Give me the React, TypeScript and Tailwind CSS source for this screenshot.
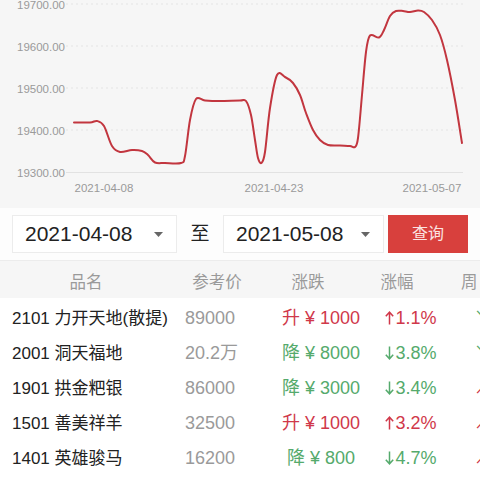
import React from "react";

type Pt = [number, number];

const linePoints: Pt[] = [
  [74, 122.5], [90, 122.5], [97, 121], [104, 126], [112, 146], [120, 152],
  [132, 150], [142, 151], [148, 155], [155, 162.5], [165, 163], [181, 163],
  [185, 156], [190, 120], [196, 99], [205, 100.5], [220, 101], [240, 100.5],
  [246, 101], [251, 115], [255, 140], [258, 158], [261.5, 163], [265, 152],
  [270, 108], [277, 75], [285, 77], [293, 83], [300, 95], [306, 113],
  [313, 130], [320, 140], [328, 145], [340, 145.5], [350, 146], [355, 147],
  [358, 138], [362, 95], [366, 52], [370, 35.5], [379, 37.5], [384, 30],
  [390, 16], [396, 11], [403, 11], [410, 12], [418, 10.5], [424, 12],
  [432, 20], [440, 35], [447, 60], [455, 100], [462, 143],
];

// catmull-rom -> cubic bezier
function smoothPath(pts: Pt[]) {
  let d = `M${pts[0][0]},${pts[0][1]}`;
  for (let i = 0; i < pts.length - 1; i++) {
    const p0 = pts[i - 1] || pts[i];
    const p1 = pts[i];
    const p2 = pts[i + 1];
    const p3 = pts[i + 2] || p2;
    const c1x = p1[0] + (p2[0] - p0[0]) / 6;
    const c1y = p1[1] + (p2[1] - p0[1]) / 6;
    const c2x = p2[0] - (p3[0] - p1[0]) / 6;
    const c2y = p2[1] - (p3[1] - p1[1]) / 6;
    d += ` C${c1x.toFixed(1)},${c1y.toFixed(1)} ${c2x.toFixed(1)},${c2y.toFixed(1)} ${p2[0]},${p2[1]}`;
  }
  return d;
}

const yLabels = [
  { v: "19700.00", y: 4 },
  { v: "19600.00", y: 46 },
  { v: "19500.00", y: 88 },
  { v: "19400.00", y: 130 },
  { v: "19300.00", y: 172.5 },
];

const xLabels = [
  { v: "2021-04-08", x: 104 },
  { v: "2021-04-23", x: 274 },
  { v: "2021-05-07", x: 432 },
];

const rows = [
  { name: "2101 力开天地(散提)", price: "89000", up: true, diff: "1000", pct: "1.1%", week: false },
  { name: "2001 洞天福地", price: "20.2万", up: false, diff: "8000", pct: "3.8%", week: false },
  { name: "1901 拱金粑银", price: "86000", up: false, diff: "3000", pct: "3.4%", week: true },
  { name: "1501 善美祥羊", price: "32500", up: true, diff: "1000", pct: "3.2%", week: true },
  { name: "1401 英雄骏马", price: "16200", up: false, diff: "800", pct: "4.7%", week: true },
];

function Chart() {
  return (
    <div className="h-[208px] bg-[#f6f6f6]">
      <svg width="480" height="208" viewBox="0 0 480 208" className="block">
        {yLabels.slice(0, 4).map((l) => (
          <line key={l.v} x1="66" x2="463" y1={l.y} y2={l.y} stroke="#e4e4e4" strokeWidth="1" strokeDasharray="2 3" />
        ))}
        <line x1="66" x2="463" y1="172.5" y2="172.5" stroke="#e2e2e2" strokeWidth="1" />
        {yLabels.map((l) => (
          <text key={l.v} x="65" y={l.y + 4.5} textAnchor="end" fontSize="11.5" fill="#9a9a9a" fontFamily="'Liberation Sans', Arial, sans-serif">
            {l.v}
          </text>
        ))}
        {xLabels.map((l) => (
          <text key={l.v} x={l.x} y="192" textAnchor="middle" fontSize="11.5" fill="#9a9a9a" fontFamily="'Liberation Sans', Arial, sans-serif">
            {l.v}
          </text>
        ))}
        <path d={smoothPath(linePoints)} fill="none" stroke="#c2363f" strokeWidth="2" strokeLinejoin="round" strokeLinecap="round" />
      </svg>
    </div>
  );
}

function DateBox({ value, width }: { value: string; width: string }) {
  return (
    <div className={`${width} shrink-0 h-[38px] flex items-center justify-between bg-white border border-[#ececec] pl-[12px] pr-[13px]`}>
      <span className="text-[21px] text-[#222]">{value}</span>
      <svg width="9" height="5" viewBox="0 0 9 5">
        <path d="M0 0 L9 0 L4.5 5 Z" fill="#666" />
      </svg>
    </div>
  );
}

function Arrow({ up }: { up: boolean }) {
  return (
    <svg width="9" height="14" viewBox="0 0 9 14" className="inline-block mr-[1px] align-[-1px]">
      {up ? (
        <path d="M4.5 13.5 V1.5 M0.8 5.2 L4.5 1.2 L8.2 5.2" fill="none" stroke="currentColor" strokeWidth="1.5" />
      ) : (
        <path d="M4.5 0.5 V12.5 M0.8 8.8 L4.5 12.8 L8.2 8.8" fill="none" stroke="currentColor" strokeWidth="1.5" />
      )}
    </svg>
  );
}

export default function App() {
  const red = "text-[#d0384a]";
  const green = "text-[#55aa6c]";
  return (
    <div
      className="w-[480px] h-[480px] overflow-hidden bg-white"
      style={{ fontFamily: "'Liberation Sans', 'Noto Sans CJK SC', sans-serif" }}
    >
      <Chart />

      <div className="h-[53px] flex items-center pl-[12px] bg-[#fdfdfd] border-b border-[#ececec]">
        <DateBox value="2021-04-08" width="w-[165px]" />
        <span className="w-[46px] shrink-0 text-center text-[19px] text-[#222]">至</span>
        <DateBox value="2021-05-08" width="w-[161px]" />
        <button className="ml-[4px] shrink-0 w-[80px] h-[38px] bg-[#d8403d] text-[#fbe3e2] text-[16px]">查询</button>
      </div>

      <div className="h-[37px] flex items-center pt-[5px] bg-[#f6f6f6] text-[16.5px] text-[#9a9a9a] whitespace-nowrap">
        <div className="w-[172px] shrink-0 text-center">品名</div>
        <div className="w-[90px] shrink-0 text-center">参考价</div>
        <div className="w-[92px] shrink-0 text-center">涨跌</div>
        <div className="w-[86px] shrink-0 text-center">涨幅</div>
        <div className="ml-[21px] shrink-0">周</div>
      </div>

      <div className="pt-[3px]">
        {rows.map((r) => (
          <div key={r.name} className="h-[35px] flex items-center whitespace-nowrap text-[18px]">
            <div className="w-[185px] shrink-0 pl-[12px] text-[17px] text-[#222]">{r.name}</div>
            <div className="w-[72px] shrink-0 text-[#9a9a9a]">{r.price}</div>
            <div className={`w-[128px] shrink-0 text-center ${r.up ? red : green}`}>
              {r.up ? "升" : "降"} ¥ {r.diff}
            </div>
            <div className={`w-[52px] shrink-0 text-center ${r.up ? red : green}`}>
              <Arrow up={r.up} />
              {r.pct}
            </div>
            <div className={`ml-[37px] shrink-0 ${r.week ? red : green}`}>{r.week ? "↗" : "↘"}</div>
          </div>
        ))}
      </div>
    </div>
  );
}
